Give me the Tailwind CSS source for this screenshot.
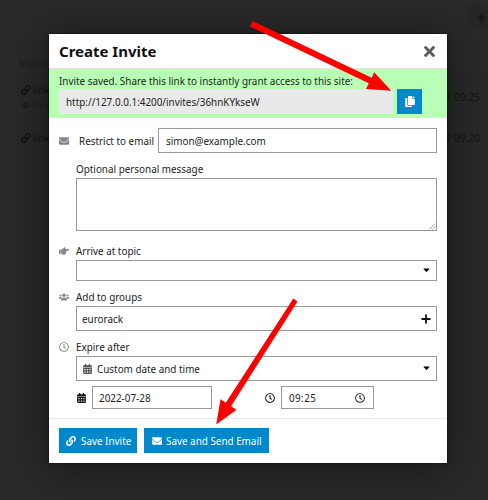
<!DOCTYPE html>
<html lang="en">
<head>
<meta charset="utf-8">
<title>Create Invite</title>
<script src="https://cdn.jsdelivr.net/npm/@tailwindcss/browser@4"></script>
</head>
<body class="relative h-[500px] w-[488px] overflow-hidden whitespace-nowrap bg-[#292929] font-['Noto_Sans',sans-serif] text-[9.88px] leading-4 text-[#222]">
<svg class="hidden">
  <symbol id="envelope" viewBox="0 0 512 512"><path d="M502.3 190.8c3.9-3.1 9.7-.2 9.7 4.7V400c0 26.5-21.5 48-48 48H48c-26.5 0-48-21.5-48-48V195.6c0-5 5.7-7.8 9.7-4.7 22.4 17.4 52.1 39.5 154.1 113.6 21.1 15.4 56.7 47.8 92.2 47.6 35.7.3 72-32.8 92.3-47.6 102-74.1 131.6-96.3 154-113.7zM256 320c23.2.4 56.6-29.2 73.4-41.4 132.7-96.3 142.8-104.7 173.4-128.7 5.8-4.5 9.2-11.5 9.2-18.9v-19c0-26.5-21.5-48-48-48H48c-26.5 0-48 21.5-48 48v19c0 7.4 3.4 14.3 9.2 18.9 30.6 23.9 40.7 32.4 173.4 128.7 16.8 12.2 50.2 41.8 73.4 41.4z"/></symbol>
  <symbol id="link" viewBox="0 0 512 512"><path d="M326.612 185.391c59.747 59.809 58.927 155.698.36 214.59-.11.12-.24.25-.36.37l-67.2 67.2c-59.27 59.27-155.699 59.262-214.96 0-59.27-59.26-59.27-155.7 0-214.96l37.106-37.106c9.84-9.84 26.786-3.3 27.294 10.606.648 17.722 3.826 35.527 9.69 52.721 1.986 5.822.567 12.262-3.783 16.612l-13.087 13.087c-28.026 28.026-28.905 73.66-1.155 101.96 28.024 28.579 74.086 28.749 102.325.51l67.2-67.19c28.191-28.191 28.073-73.757 0-101.83-3.701-3.694-7.429-6.564-10.341-8.569a16.037 16.037 0 0 1-6.947-12.606c-.396-10.567 3.348-21.456 11.698-29.806l21.054-21.055c5.521-5.521 14.182-6.199 20.584-1.731a152.482 152.482 0 0 1 20.522 17.197zM467.547 44.449c-59.261-59.262-155.69-59.27-214.96 0l-67.2 67.2c-.12.12-.25.25-.36.37-58.566 58.892-59.387 154.781.36 214.59a152.454 152.454 0 0 0 20.521 17.196c6.402 4.468 15.064 3.789 20.584-1.731l21.054-21.055c8.35-8.35 12.094-19.239 11.698-29.806a16.037 16.037 0 0 0-6.947-12.606c-2.912-2.005-6.64-4.875-10.341-8.569-28.073-28.073-28.191-73.639 0-101.83l67.2-67.19c28.239-28.239 74.3-28.069 102.325.51 27.75 28.3 26.872 73.934-1.155 101.96l-13.087 13.087c-4.35 4.35-5.769 10.79-3.783 16.612 5.864 17.194 9.042 34.999 9.69 52.721.509 13.906 17.454 20.446 27.294 10.606l37.106-37.106c59.271-59.259 59.271-155.699.001-214.959z"/></symbol>
  <symbol id="copy" viewBox="0 0 448 512"><path d="M320 448v40c0 13.255-10.745 24-24 24H24c-13.255 0-24-10.745-24-24V120c0-13.255 10.745-24 24-24h72v296c0 30.879 25.121 56 56 56h168zm0-344V0H152c-13.255 0-24 10.745-24 24v368c0 13.255 10.745 24 24 24h272c13.255 0 24-10.745 24-24V128H344c-13.2 0-24-10.8-24-24zm120.971-31.029L375.029 7.029A24 24 0 0 0 358.059 0H352v96h96v-6.059a24 24 0 0 0-7.029-16.97z"/></symbol>
  <symbol id="times" viewBox="0 80 352 352"><path d="M242.72 256l100.07-100.07c12.28-12.28 12.28-32.19 0-44.48l-22.24-22.24c-12.28-12.28-32.19-12.28-44.48 0L176 189.28 75.93 89.21c-12.28-12.28-32.19-12.28-44.48 0L9.21 111.45c-12.28 12.28-12.28 32.19 0 44.48L109.28 256 9.21 356.07c-12.28 12.28-12.28 32.19 0 44.48l22.24 22.24c12.28 12.28 32.2 12.28 44.48 0L176 322.72l100.07 100.07c12.28 12.28 32.2 12.28 44.48 0l22.24-22.24c12.28-12.28 12.28-32.19 0-44.48L242.72 256z"/></symbol>
  <symbol id="calendar" viewBox="0 0 448 512"><path fill-rule="evenodd" d="M0 464c0 26.500 21.500 48 48 48h352c26.500 0 48-21.500 48-48V192H0zM64 256h64v64H64zM192 256h64v64h-64zM320 256h64v64h-64zM64 384h64v64H64zM192 384h64v64h-64zM320 384h64v64h-64zM400 64h-48V16c0-8.800-7.200-16-16-16h-32c-8.800 0-16 7.200-16 16v48H160V16c0-8.800-7.200-16-16-16h-32c-8.800 0-16 7.200-16 16v48H48C21.500 64 0 85.500 0 112v48h448v-48c0-26.500-21.500-48-48-48z"/></symbol>
  <symbol id="clock" viewBox="0 0 512 512"><path d="M256 8C119 8 8 119 8 256s111 248 248 248 248-111 248-248S393 8 256 8zm0 448c-110.500 0-200-89.500-200-200S145.500 56 256 56s200 89.500 200 200-89.500 200-200 200zm61.800-104.400l-84.900-61.700c-3.100-2.300-4.900-5.900-4.900-9.700V116c0-6.600 5.400-12 12-12h32c6.600 0 12 5.400 12 12v141.700l66.800 48.600c5.400 3.900 6.500 11.400 2.600 16.800L334.600 349c-3.900 5.300-11.400 6.500-16.800 2.600z"/></symbol>
  <symbol id="users" viewBox="0 0 640 512"><path d="M96 224c35.300 0 64-28.700 64-64s-28.700-64-64-64-64 28.700-64 64 28.700 64 64 64zm448 0c35.300 0 64-28.700 64-64s-28.700-64-64-64-64 28.700-64 64 28.700 64 64 64zm32 32h-64c-17.600 0-33.500 7.100-45.100 18.600 40.300 22.100 68.900 62 75.100 109.400h66c17.700 0 32-14.300 32-32v-32c0-35.300-28.700-64-64-64zm-256 0c61.900 0 112-50.100 112-112S381.900 32 320 32 208 82.100 208 144s50.100 112 112 112zm76.800 32h-8.300c-20.800 10-43.900 16-68.500 16s-47.600-6-68.500-16h-8.300C179.600 288 128 339.600 128 403.200V432c0 26.500 21.500 48 48 48h288c26.500 0 48-21.500 48-48v-28.800c0-63.600-51.600-115.200-115.200-115.200zm-223.700-13.400C161.500 263.100 145.600 256 128 256H64c-35.300 0-64 28.700-64 64v32c0 17.700 14.300 32 32 32h65.900c6.300-47.400 34.900-87.300 75.200-109.400z"/></symbol>
  <symbol id="hand" viewBox="0 0 512 512"><path d="M512 199.652c0 23.625-20.650 43.826-44.800 43.826h-99.851c16.340 17.048 18.346 49.766-6.299 70.944 14.288 22.829 2.147 53.017-16.450 62.315C353.574 425.878 322.654 448 272 448c-2.746 0-13.276-.203-16-.195-61.971.168-76.894-31.065-123.731-38.315C120.596 407.683 112 397.599 112 385.786V214.261l.002-.001c.011-18.366 10.607-35.889 28.464-43.845 28.886-12.994 95.413-49.038 107.534-77.323 7.797-18.194 21.384-29.084 40-29.092 34.222-.014 57.752 35.098 44.119 66.908-3.583 8.359-8.312 16.670-14.153 24.918H467.200c23.450 0 44.800 20.543 44.800 43.826zM96 200v192c0 13.255-10.745 24-24 24H24c-13.255 0-24-10.745-24-24V200c0-13.255 10.745-24 24-24h48c13.255 0 24 10.745 24 24zM68 368c0-11.046-8.954-20-20-20s-20 8.954-20 20 8.954 20 20 20 20-8.954 20-20z"/></symbol>
  <symbol id="plus" viewBox="0 0 10 10"><path d="M4.100 0.500h1.800v3.600h3.600v1.800H5.900v3.600H4.100V5.900H.5V4.100h3.600z"/></symbol>
  <symbol id="caret" viewBox="0 0 8 5"><path d="M.8.5h6.400q.6 0 .2.500L4.400 4.200q-.4.400-.8 0L.6 1Q.2.500.8.500z"/></symbol>
</svg>

<!-- Dimmed invites page -->
<div class="flex h-full flex-col text-[#141414]">
  <div class="flex h-[30px] justify-end pt-[5px]"><div class="flex w-[19px] items-center justify-center bg-[#262626]"><svg class="ml-[5px] size-[9px] fill-current"><use href="#plus"/></svg></div></div>
  <div class="ml-[14px] mt-[21px] flex h-[24px] items-center border-b border-[#242424] pl-[5px] text-[#1f1f1f]">Invitations</div>
  <div class="ml-[14px] flex h-[44px] items-center justify-between border-b border-[#262626] pl-[7px] pr-2">
    <div class="flex flex-col">
      <span class="flex items-center gap-[2px]"><svg class="size-[10px] fill-current"><use href="#link"/></svg>link</span>
      <span class="flex items-center gap-[2px] text-[9px] leading-[14px] text-[#1d1d1d]"><svg class="h-[8px] w-[9px] fill-current"><use href="#users"/></svg>eurorack</span>
    </div>
    <span class="text-[10.2px]">2022 09:25</span>
  </div>
  <div class="ml-[14px] flex h-[39px] items-center justify-between border-b border-[#272727] pl-[7px] pr-2">
    <span class="flex items-center gap-[2px]"><svg class="size-[10px] fill-current"><use href="#link"/></svg>link</span>
    <span class="text-[10.2px]">2022 09:20</span>
  </div>
</div>

<!-- Invite dialog -->
<div class="absolute left-[49px] top-[34px] flex h-[429px] w-[398px] flex-col bg-white shadow-[0_5px_40px_rgba(0,0,0,0.45),0_0_2px_rgba(0,0,0,0.9)]">
  <header class="flex h-[35px] shrink-0 items-center justify-between border-b border-[#e6e6e6] pl-[10px] pr-[12px]">
    <h1 class="text-[15px] font-bold leading-5 text-[#111]">Create Invite</h1>
    <svg class="size-[11px] fill-[#5c5c5c]"><use href="#times"/></svg>
  </header>
  <section class="h-[49px] shrink-0 bg-[#b8ffb5] px-[10px] pt-1">
    <div>Invite saved. Share this link to instantly grant access to this site:</div>
    <div class="flex gap-1">
      <div class="flex h-[25px] w-[334px] items-center bg-[#e9e9e9] pl-[7px]">http://127.0.0.1:4200/invites/36hnKYkseW</div>
      <button class="flex size-[25px] items-center justify-center bg-[#08c]"><svg class="h-[11px] w-[10px] fill-white"><use href="#copy"/></svg></button>
    </div>
  </section>
  <main class="flex grow flex-col pl-[27px] pr-[10px] pt-[10px]">
    <div class="-ml-[17px] flex h-[25px] items-center">
      <svg class="size-[10px] fill-[#888]"><use href="#envelope"/></svg>
      <span class="ml-[10px] w-[79px]">Restrict to email</span>
      <div class="flex h-[25px] grow items-center border border-[#999] pl-[7px]">simon@example.com</div>
    </div>
    <div class="mt-[8px]">Optional personal message</div>
    <div class="mt-[1px] flex h-[53px] shrink-0 items-end justify-end border border-[#999]"><svg class="size-[7px]" viewBox="0 0 7 7" fill="none" stroke="#888" stroke-width=".7"><path d="M.5 6.500l6-6M3.500 6.500l3-3"/></svg></div>
    <div class="-ml-[17px] mt-[12px] flex items-center"><svg class="mr-[7px] size-[10px] fill-[#888]"><use href="#hand"/></svg>Arrive at topic</div>
    <div class="mt-[1px] flex h-[21px] items-center justify-end border border-[#999] pr-[6px]"><svg class="h-[4.500px] w-[7px] fill-black"><use href="#caret"/></svg></div>
    <div class="-ml-[17px] mt-[8px] flex items-center"><svg class="mr-[7px] h-[8px] w-[10px] fill-[#888]"><use href="#users"/></svg>Add to groups</div>
    <div class="mt-[1px] flex h-[25px] items-center justify-between border border-[#999] pl-[5px] pr-[5px]">eurorack<svg class="size-[10px] fill-[#111]"><use href="#plus"/></svg></div>
    <div class="-ml-[17px] mt-[8px] flex items-center"><svg class="mr-[7px] size-[10px] fill-[#888]"><use href="#clock"/></svg>Expire after</div>
    <div class="mt-[1px] flex h-[25px] items-center border border-[#999] pl-[6px] pr-[6px]"><svg class="mr-[5px] h-[10px] w-[9px] fill-[#555]"><use href="#calendar"/></svg><span class="grow">Custom date and time</span><svg class="h-[4.500px] w-[7px] fill-black"><use href="#caret"/></svg></div>
    <div class="mt-[5px] flex h-[23px] items-center">
      <svg class="ml-[1px] mr-[6px] h-[10px] w-[9px] fill-[#111]"><use href="#calendar"/></svg>
      <div class="flex h-[23px] w-[120px] items-center border border-[#999] pl-[6px]">2022-07-28</div>
      <svg class="ml-[53px] mr-[6px] size-[10px] fill-[#111]"><use href="#clock"/></svg>
      <div class="flex h-[23px] w-[93px] items-center justify-between border border-[#999] pl-[7px] pr-[8px]"><span class="tracking-[0.4px]">09:25</span><svg class="size-[10px] fill-[#222]"><use href="#clock"/></svg></div>
    </div>
  </main>
  <footer class="flex h-[45px] shrink-0 items-start gap-[7px] border-t border-[#e9e9e9] pl-[10px] pt-[9px] text-white">
    <button class="flex h-[25px] w-[78px] items-center gap-[5px] bg-[#08c] pl-[7px]"><svg class="size-[10px] fill-current"><use href="#link"/></svg>Save Invite</button>
    <button class="flex h-[25px] w-[125px] items-center gap-[4px] bg-[#08c] pl-[8px]"><svg class="size-[10px] fill-current"><use href="#envelope"/></svg>Save and Send Email</button>
  </footer>
</div>

<!-- Annotation arrows -->
<svg class="pointer-events-none absolute inset-0 h-[500px] w-[488px] fill-[#f00]" viewBox="0 0 488 500">
  <path d="M252.700 21L371.700 77.700L374.200 72.200L391.300 90.700L366 89L368.800 83.200L250 26.500z"/>
  <path d="M293.300 298.500L225.800 402.800L220.500 399.300L216.200 424.500L236.500 409.800L231 406.200L297.500 301.500z"/>
</svg>
</body>
</html>
